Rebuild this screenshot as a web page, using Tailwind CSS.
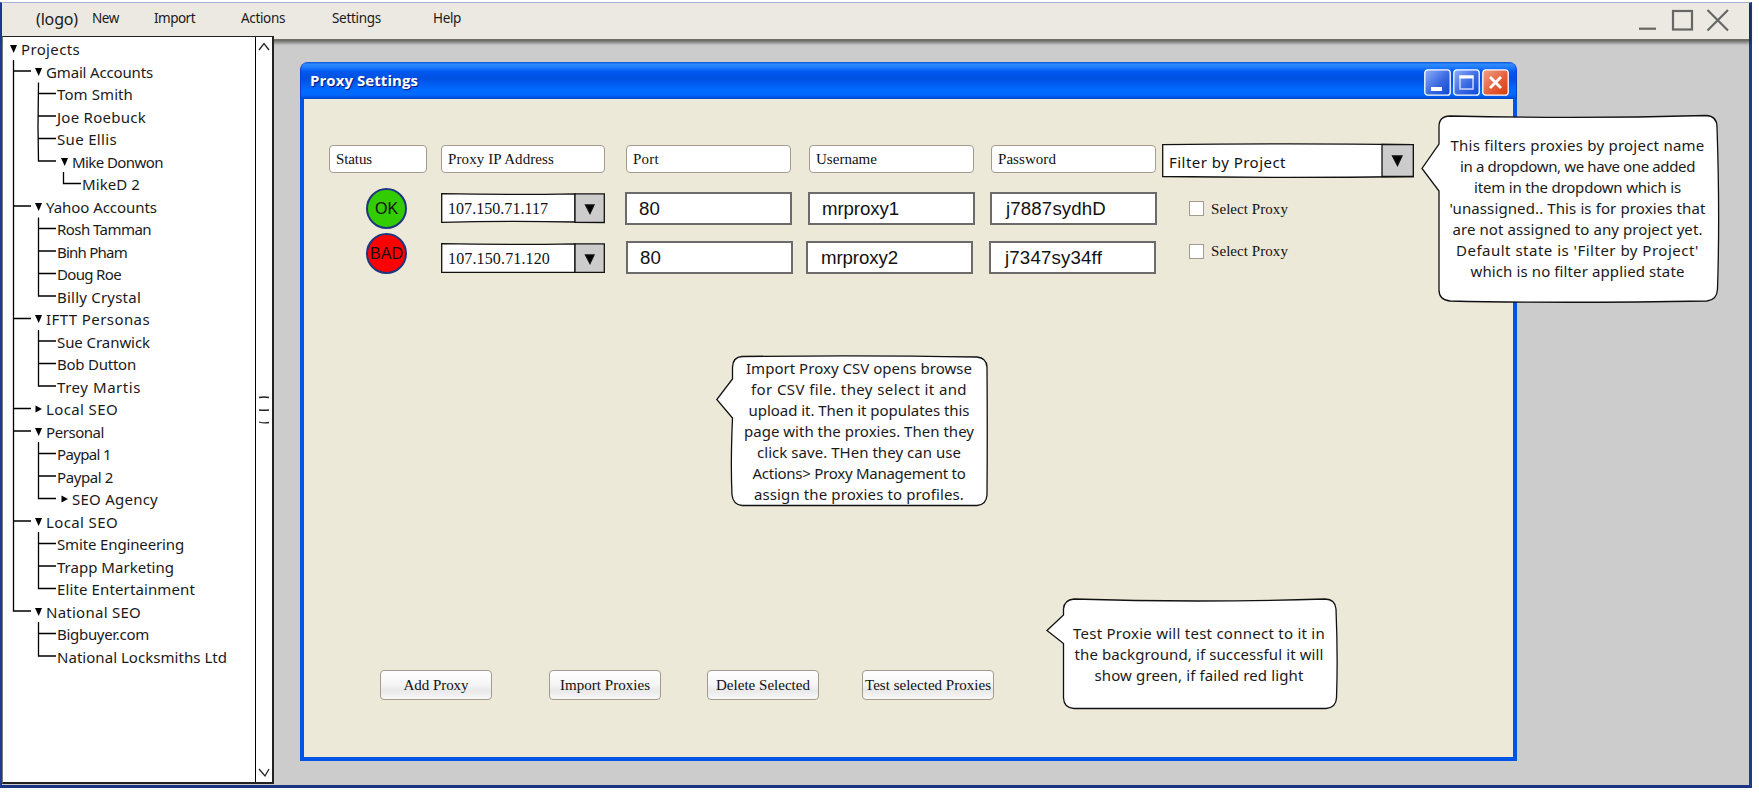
<!DOCTYPE html>
<html lang="en">
<head>
<meta charset="utf-8">
<title>Proxy Settings</title>
<script src="https://cdn.jsdelivr.net/npm/@tailwindcss/browser@4"></script>
</head>
<body class="bg-white text-black">
<div class="relative flex h-[800px] w-[1759px] flex-col overflow-hidden pt-[2px]">
  <div class="relative flex h-[786px] w-[1752px] flex-col border-t border-r-[3px] border-b-[3px] border-l-2 border-t-[#aab4d4] border-r-[#1f3a8a] border-b-[#1c3482] border-l-[#1f3a93] bg-[#cccccc]">

    <header class="z-10 flex h-[38px] shrink-0 border-b-2 border-[#6f6f68] bg-[#ece9e2] font-['Noto_Sans',sans-serif] text-[13.5px] leading-[30px] text-[#1a1a1a] shadow-[1px_2px_3px_rgba(0,0,0,0.45)]">
      <span class="ml-[34px] w-[56px] text-[16px] leading-[33px] whitespace-nowrap" data-w="42">(logo)</span>
      <span class="w-[62px] whitespace-nowrap" data-w="27">New</span>
      <span class="w-[87px] whitespace-nowrap" data-w="41">Import</span>
      <span class="w-[91px] whitespace-nowrap" data-w="44">Actions</span>
      <span class="w-[101px] whitespace-nowrap" data-w="49">Settings</span>
      <span class="whitespace-nowrap" data-w="28">Help</span>
      <svg class="mt-[5px] mr-[19px] ml-auto" width="92" height="24" fill="none" stroke="#666" stroke-width="2.200">
        <path d="M1 20.700H18"/><rect x="35" y="3" width="19" height="18.500"/><path d="M69.500 2L90 22.500M90 2L69.500 22.500"/>
      </svg>
    </header>

    <div class="flex min-h-0 flex-1">
      <aside class="relative z-20 -mt-[5px] mb-px flex w-[272px] border border-r-2 border-b-2 border-[#222] border-l-[#777] bg-white">
        <svg class="absolute top-0 left-0" width="90" height="640" fill="none" stroke="#000" stroke-width="1.300">
          <path d="M10.500 23V574H28M10.500 34H28M10.500 169H28M10.500 281.500H28M10.500 371.500H28M10.500 394H28M10.500 484H28"/>
          <path d="M35.500 45.500L35 90L35.500 124H53M35.500 56.500H53M35.500 79H53M35.500 101.500H53"/>
          <path d="M60.500 135V146.500H78"/>
          <path d="M35.500 180.500V259H53M35.500 191.500H53M35.500 214H53M35.500 236.500H53"/>
          <path d="M35.500 293V349H53M35.500 304H53M35.500 326.500H53"/>
          <path d="M35.500 405V461.500H53M35.500 416.500H53M35.500 439H53"/>
          <path d="M35.500 495V551.500H53M35.500 506.500H53M35.500 529H53"/>
          <path d="M35.500 585V619H53M35.500 596.500H53"/>
        </svg>
        <ul id="tree" class="relative pt-px font-['Comic_Sans_MS','Noto_Sans',sans-serif] text-[15px] leading-[22px] text-[#1a1a1a]"></ul>
        <div class="ml-auto flex w-[17px] flex-col items-center justify-between border-l border-black py-[4px]">
          <svg width="14" height="10" fill="none" stroke="#222" stroke-width="1.300"><path d="M2 9L7 2.500L12 9"/></svg>
          <svg width="14" height="30" fill="none" stroke="#222" stroke-width="1.300"><path d="M2 2.500Q7 1.500 12 2.500M2 15Q7 15.500 12 15M2 27Q7 28.500 12 27.500"/></svg>
          <svg width="14" height="10" fill="none" stroke="#222" stroke-width="1.300"><path d="M2 1L8 8L12 1"/></svg>
        </div>
      </aside>

      <main class="mt-[21px] ml-[26px] flex h-[699px] w-[1217px] flex-col">
        <div class="flex h-[37px] shrink-0 items-start rounded-t-[8px] border-x border-[#0a3fd0] bg-[linear-gradient(180deg,#0a50d0_0%,#2f8bff_6%,#1f7dff_14%,#0058ee_26%,#0050e0_45%,#0058ee_55%,#006aff_75%,#006aff_88%,#0050dc_97%,#0040c0_100%)] pt-[6px] pr-[7px] pl-[9px]">
          <span class="mt-[2px] font-['Open_Sans',sans-serif] text-[15px] leading-[20px] font-bold whitespace-nowrap text-white [text-shadow:1px_1px_1px_#0a1883]" data-w="108">Proxy Settings</span>
          <div class="ml-auto flex gap-[2px] pt-px">
            <svg width="27" height="27"><defs><linearGradient id="b" x2="1" y2="1"><stop stop-color="#8fb0ff"/><stop offset=".55" stop-color="#3a68e0"/><stop offset="1" stop-color="#0b48d8"/></linearGradient><linearGradient id="r" x2="1" y2="1"><stop stop-color="#f0a28c"/><stop offset=".6" stop-color="#e45a35"/><stop offset="1" stop-color="#d83a08"/></linearGradient></defs><rect x=".8" y=".8" width="25.400" height="25.400" rx="3" fill="url(#b)" stroke="#fff" stroke-width="1.300"/><rect x="7" y="18" width="11" height="4" fill="#fff"/></svg>
            <svg width="27" height="27"><rect x=".8" y=".8" width="25.400" height="25.400" rx="3" fill="url(#b)" stroke="#fff" stroke-width="1.300"/><rect x="7" y="7" width="13" height="13" fill="none" stroke="#c8d6ff" stroke-width="1.500"/><path d="M6.500 8H20.500" stroke="#fff" stroke-width="3"/></svg>
            <svg width="27" height="27"><rect x=".8" y=".8" width="25.400" height="25.400" rx="3" fill="url(#r)" stroke="#fff" stroke-width="1.300"/><path d="M8 8L19 19M19 8L8 19" stroke="#fff" stroke-width="2.800"/></svg>
          </div>
        </div>

        <section class="flex flex-1 flex-col border-4 border-t-0 border-[#0055e5] bg-[#ece9d8] font-['Liberation_Serif',serif] text-[15px] leading-[18px] text-[#111]">
          <div class="mt-[45px] flex h-[44px] items-start">
            <div class="mt-px ml-[25px] h-[28px] w-[98px] rounded-[4px] border border-[#a39b8e] bg-white pt-[4px] pl-[6px]"><span data-w="36">Status</span></div>
            <div class="mt-px ml-[14px] h-[28px] w-[164px] rounded-[4px] border border-[#a39b8e] bg-white pt-[4px] pl-[6px]"><span data-w="106">Proxy IP Address</span></div>
            <div class="mt-px ml-[21px] h-[28px] w-[165px] rounded-[4px] border border-[#a39b8e] bg-white pt-[4px] pl-[6px]"><span data-w="26">Port</span></div>
            <div class="mt-px ml-[18px] h-[28px] w-[165px] rounded-[4px] border border-[#a39b8e] bg-white pt-[4px] pl-[6px]"><span data-w="61">Username</span></div>
            <div class="mt-px ml-[17px] h-[28px] w-[165px] rounded-[4px] border border-[#a39b8e] bg-white pt-[4px] pl-[6px]"><span data-w="58">Password</span></div>
            <div class="relative ml-[6px] h-[33px] w-[252px]">
              <svg class="absolute -top-px left-0" width="252" height="36" stroke="#111" stroke-width="1.300"><path d="M.7 1.700Q126 0 251.300 1.700V33.500Q126 35.300 .7 33.500Z" fill="#fff"/><path d="M220 1.300L251.300 1.700V33.500H220Z" fill="#ccc"/><path d="M230.500 13H240L235.500 22.500Z" fill="#000"/></svg>
              <span class="relative ml-[7px] block pt-[9px] font-['Comic_Sans_MS','Noto_Sans',sans-serif] whitespace-nowrap"><span data-w="117">Filter by Project</span></span>
            </div>
          </div>

          <div class="flex h-[45px] items-start">
            <div class="ml-[62px] flex size-[41px] items-center justify-center rounded-full border-2 border-[#1f357f] bg-[#33cc00] font-['Liberation_Sans',sans-serif] text-[16px]">OK</div>
            <div class="relative mt-[5px] ml-[34px] h-[30px] w-[164px]">
              <svg class="absolute top-0 left-0" width="164" height="31" stroke="#111" stroke-width="1.300"><path d="M.7 .7Q67 2 134 .9V29Q67 27.700 .7 29.300Z" fill="#fff"/><path d="M134 .9H163.300V29.500L134 29.300Z" fill="#ccc"/><path d="M144.500 12H153L149 20.500Z" fill="#000"/></svg>
              <span class="relative ml-[7px] block pt-[7px] text-[16px]"><span data-w="100">107.150.71.117</span></span>
            </div>
            <div class="mt-[4px] ml-[20px] h-[33px] w-[167px] border-2 border-[#6b6b6b] bg-white pt-[4px] pl-[12px] font-['Liberation_Sans',sans-serif] text-[18.670px] leading-[21px]">80</div>
            <div class="mt-[4px] ml-[16px] h-[33px] w-[167px] border-2 border-[#6b6b6b] bg-white pt-[4px] pl-[12px] font-['Liberation_Sans',sans-serif] text-[18.670px] leading-[21px]"><span data-w="77">mrproxy1</span></div>
            <div class="mt-[4px] ml-[15px] h-[33px] w-[167px] border-2 border-[#6b6b6b] bg-white pt-[4px] pl-[14px] font-['Liberation_Sans',sans-serif] text-[18.670px] leading-[21px]"><span data-w="100">j7887sydhD</span></div>
            <div class="mt-[13px] ml-[32px] size-[15px] border border-[#a39b8e] bg-white"></div>
            <div class="mt-[12px] ml-[7px]"><span data-w="77">Select Proxy</span></div>
          </div>

          <div class="flex h-[45px] items-start">
            <div class="ml-[62px] flex size-[41px] items-center justify-center rounded-full border-2 border-[#1f357f] bg-[#ff0000] font-['Liberation_Sans',sans-serif] text-[16px]">BAD</div>
            <div class="relative mt-[10px] ml-[34px] h-[30px] w-[164px]">
              <svg class="absolute top-0 left-0" width="164" height="31" stroke="#111" stroke-width="1.300"><path d="M.7 .7Q67 2 134 .9V29.300H.7Z" fill="#fff"/><path d="M134 .9H163.300V29.300H134Z" fill="#ccc"/><path d="M144.500 12H153L149 20.500Z" fill="#000"/></svg>
              <span class="relative ml-[7px] block pt-[7px] text-[16px]"><span data-w="102">107.150.71.120</span></span>
            </div>
            <div class="mt-[8px] ml-[21px] h-[33px] w-[167px] border-2 border-[#6b6b6b] bg-white pt-[4px] pl-[12px] font-['Liberation_Sans',sans-serif] text-[18.670px] leading-[21px]">80</div>
            <div class="mt-[8px] ml-[13px] h-[33px] w-[167px] border-2 border-[#6b6b6b] bg-white pt-[4px] pl-[13px] font-['Liberation_Sans',sans-serif] text-[18.670px] leading-[21px]"><span data-w="77">mrproxy2</span></div>
            <div class="mt-[8px] ml-[16px] h-[33px] w-[167px] border-2 border-[#6b6b6b] bg-white pt-[4px] pl-[14px] font-['Liberation_Sans',sans-serif] text-[18.670px] leading-[21px]"><span data-w="97">j7347sy34ff</span></div>
            <div class="mt-[11px] ml-[33px] size-[15px] border border-[#a39b8e] bg-white"></div>
            <div class="mt-[9px] ml-[7px]"><span data-w="77">Select Proxy</span></div>
          </div>

          <div class="mt-auto mb-[57px] flex h-[30px]">
            <button class="ml-[76px] w-[112px] rounded-[4px] border border-[#a39b8e] bg-[linear-gradient(#fff,#f6f6f6_45%,#e9e9e9_70%,#f8f8f8)] whitespace-nowrap"><span data-w="65">Add Proxy</span></button>
            <button class="ml-[57px] w-[112px] rounded-[4px] border border-[#a39b8e] bg-[linear-gradient(#fff,#f6f6f6_45%,#e9e9e9_70%,#f8f8f8)] whitespace-nowrap"><span data-w="90">Import Proxies</span></button>
            <button class="ml-[46px] w-[112px] rounded-[4px] border border-[#a39b8e] bg-[linear-gradient(#fff,#f6f6f6_45%,#e9e9e9_70%,#f8f8f8)] whitespace-nowrap"><span data-w="94">Delete Selected</span></button>
            <button class="ml-[43px] flex w-[132px] items-center justify-center rounded-[4px] border border-[#a39b8e] bg-[linear-gradient(#fff,#f6f6f6_45%,#e9e9e9_70%,#f8f8f8)] whitespace-nowrap"><span data-w="126">Test selected Proxies</span></button>
          </div>
        </section>
      </main>
    </div>
  </div>

  <!-- Note balloons floating over the window -->
  <div class="absolute top-[114px] left-[1420px] z-30 h-[190px] w-[300px] font-['Comic_Sans_MS','Noto_Sans',sans-serif] text-[15px] leading-[21px] text-[#1a1a1a]">
    <svg class="absolute inset-0" width="300" height="190" fill="#fff" stroke="#111" stroke-width="1.300"><path d="M19 30V13Q19 2 30 2Q160 5 286 1.500Q297 2 297 13Q300 100 297.500 175Q297 186 287 187Q140 189.500 30 187Q19 186 19 176V77L2 54.500Z"/></svg>
    <div class="relative ml-[19px] flex w-[277px] flex-col items-center pt-[21px] whitespace-nowrap">
      <span data-w="254">This filters proxies by project name</span><span data-w="235">in a dropdown, we have one added</span><span data-w="207">item in the dropdown which is</span><span data-w="256">'unassigned.. This is for proxies that</span><span data-w="250">are not assigned to any project yet.</span><span data-w="243">Default state is 'Filter by Project'</span><span data-w="214">which is no filter applied state</span>
    </div>
  </div>
  <div class="absolute top-[354px] left-[715px] z-30 h-[154px] w-[275px] font-['Comic_Sans_MS','Noto_Sans',sans-serif] text-[15px] leading-[21px] text-[#1a1a1a]">
    <svg class="absolute inset-0" width="275" height="154" fill="#fff" stroke="#111" stroke-width="1.300"><path d="M17.500 25V13Q18 3 27 2.500Q150 1 262 3Q271.500 4 272 13Q272.500 80 272 141Q271.500 150.500 262 151.500H27Q18 150.500 17 141Q15.500 110 17.500 64L1.800 45.500Z"/></svg>
    <div class="relative ml-[17px] flex w-[254px] flex-col items-center pt-[4px] whitespace-nowrap">
      <span data-w="226">Import Proxy CSV opens browse</span><span data-w="216">for CSV file. they select it and</span><span data-w="221">upload it. Then it populates this</span><span data-w="230">page with the proxies. Then they</span><span data-w="204">click save. THen they can use</span><span data-w="213">Actions&gt; Proxy Management to</span><span data-w="210">assign the proxies to profiles.</span>
    </div>
  </div>
  <div class="absolute top-[597px] left-[1045px] z-30 h-[114px] w-[295px] font-['Comic_Sans_MS','Noto_Sans',sans-serif] text-[15px] leading-[21px] text-[#1a1a1a]">
    <svg class="absolute inset-0" width="295" height="114" fill="#fff" stroke="#111" stroke-width="1.300"><path d="M18.500 18V12Q19 3 29 2Q150 6 280 2Q290.500 2.500 291 12Q293 60 291.500 101Q291 110.500 281 111.500H29Q19 111 18.500 101V46.500L2 33.500Z"/></svg>
    <div class="relative ml-[17px] flex w-[274px] flex-col items-center pt-[26px] whitespace-nowrap">
      <span data-w="252">Test Proxie will test connect to it in</span><span data-w="249">the background, if successful it will</span><span data-w="209">show green, if failed red light</span>
    </div>
  </div>
</div>
<script>
// Tree rows: [indent of label, marker ('v' open, '>' closed, '' leaf), label, label width]
const rows = [
  [18,'v','Projects',59],[43,'v','Gmail Accounts',107],[54,'','Tom Smith',76],[54,'','Joe Roebuck',89],[54,'','Sue Ellis',60],
  [69,'v','Mike Donwon',91],[79,'','MikeD 2',58],[43,'v','Yahoo Accounts',111],[54,'','Rosh Tamman',94],[54,'','Binh Pham',70],
  [54,'','Doug Roe',64],[54,'','Billy Crystal',84],[43,'v','IFTT Personas',104],[54,'','Sue Cranwick',93],[54,'','Bob Dutton',79],
  [54,'','Trey Martis',84],[43,'>','Local SEO',72],[43,'v','Personal',58],[54,'','Paypal 1',54],[54,'','Paypal 2',56],
  [69,'>','SEO Agency',86],[43,'v','Local SEO',72],[54,'','Smite Engineering',127],[54,'','Trapp Marketing',117],
  [54,'','Elite Entertainment',138],[43,'v','National SEO',95],[54,'','Bigbuyer.com',92],[54,'','National Locksmiths Ltd',170]
];
document.getElementById('tree').innerHTML = rows.map(([x, m, t, w]) =>
  `<li class="flex h-[22.5px] items-start whitespace-nowrap" style="padding-left:${m ? x - 11 : x}px">` +
  (m ? `<svg class="mt-[6px] w-[11px] shrink-0" width="11" height="10"><path d="${m === 'v' ? 'M0 1H7L3.700 9Z' : 'M.5 1.500V8.500L7 5Z'}"/></svg>` : '') +
  `<span data-w="${w}">${t}</span></li>`).join('');
// Spread each label to its width with letter spacing
function fit() {
  document.querySelectorAll('[data-w]').forEach(e => {
    const r = document.createRange();
    r.selectNodeContents(e);
    let s = parseFloat(e.style.letterSpacing) || 0.01;
    e.style.letterSpacing = s + 'px';
    for (let i = 0; i < 5; i++) {
      s += (+e.dataset.w - r.getBoundingClientRect().width) / e.textContent.length;
      e.style.letterSpacing = s + 'px';
    }
  });
}
fit();
window.addEventListener('load', fit);
document.fonts.ready.then(fit);
</script>
</body>
</html>
